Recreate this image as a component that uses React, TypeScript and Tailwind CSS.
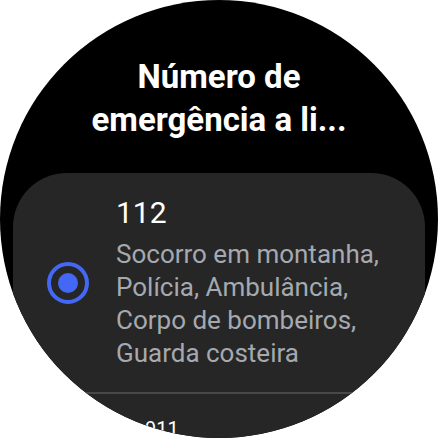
const detail = ['Socorro em montanha,', 'Polícia, Ambulância,', 'Corpo de bombeiros,', 'Guarda costeira']

function Radio({ on }: { on: boolean }) {
  return (
    <span className="shrink-0 w-[42px] h-[42px] rounded-full border-[4px] border-[#4468f6] flex items-center justify-center">
      {on && <span className="w-[20px] h-[20px] rounded-full bg-[#4468f6]" />}
    </span>
  )
}

export default function App() {
  return (
    <div className="w-[438px] h-[438px] bg-white" style={{ fontFamily: 'Roboto, "Noto Sans", sans-serif' }}>
      <div className="w-[438px] h-[438px] rounded-full bg-black overflow-hidden flex flex-col">
        {/* Title */}
        <h1 className="pt-[55px] text-center text-white font-bold text-[33px] leading-[43px]">
          Número de
          <br />
          emergência a li...
        </h1>

        {/* List card */}
        <div className="mt-[32px] mx-[13px] bg-[#262626] rounded-[54px] flex flex-col">
          <div className="flex items-center gap-[27px] pl-[34px] pr-[20px] pt-[22px] pb-[22px]">
            <Radio on />
            <div className="min-w-0">
              <p className="text-white text-[30px] leading-[36px]">112</p>
              <p className="mt-[7px] text-[#a5a9b0] text-[26px] leading-[33px]">
                {detail.map((line) => (
                  <span key={line} className="block whitespace-nowrap">
                    {line}
                  </span>
                ))}
              </p>
            </div>
          </div>
          <div className="h-[2px] bg-[#48484a]" />
          {/* next item, shrunk at the screen edge */}
          <div className="pl-[132px] pt-[23px] pb-[20px]">
            <p className="text-white text-[20px] leading-[24px]">911</p>
          </div>
        </div>
      </div>
    </div>
  )
}
